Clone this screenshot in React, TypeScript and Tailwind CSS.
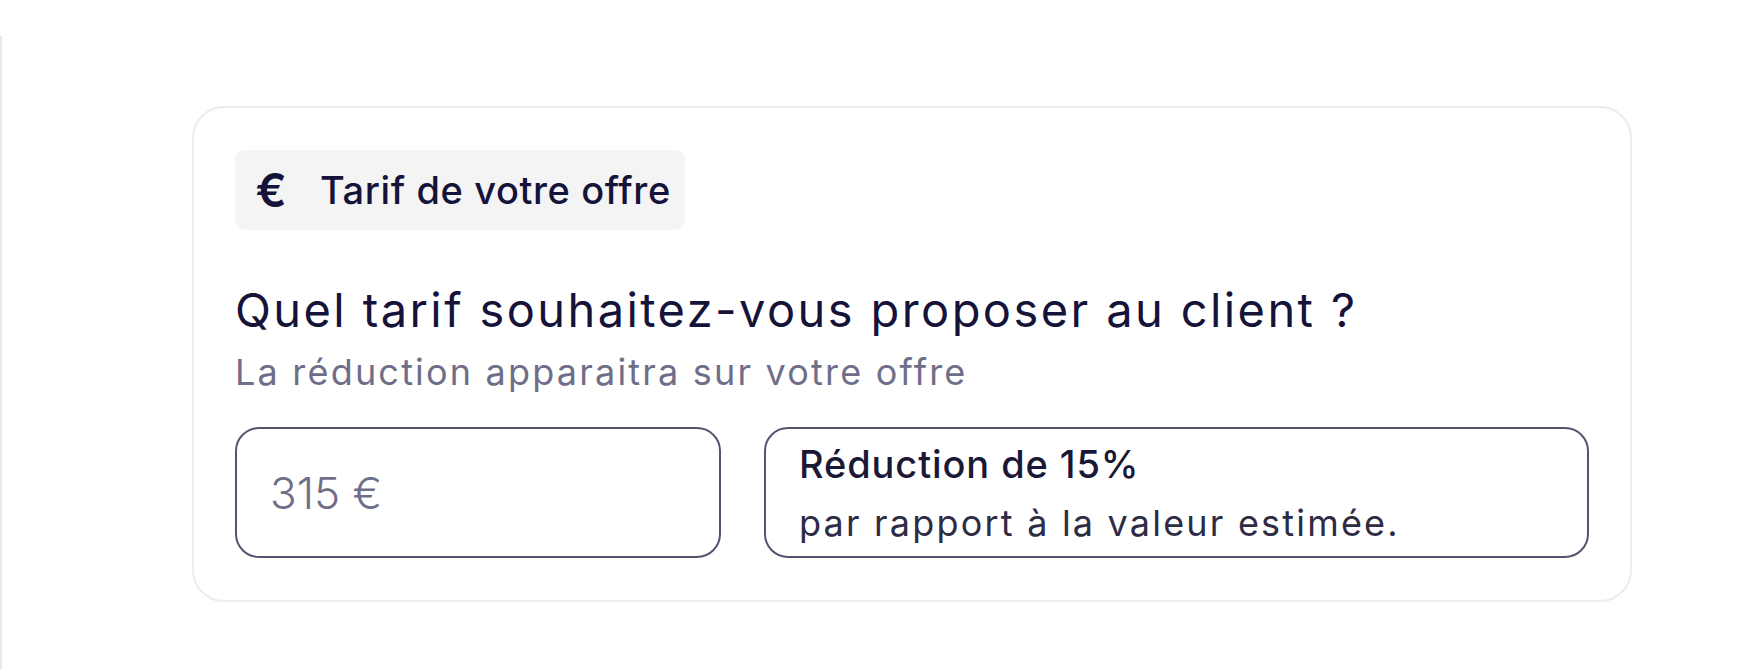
import React from "react";

export default function App() {
  return (
    <div className="min-h-screen w-full bg-white pt-[36px] font-['Inter',sans-serif]">
      <div className="min-h-[633px] border-l-2 border-[#e8e8e8] bg-white pl-[190px] pt-[70px]">
        <div className="flex w-[1440px] flex-col rounded-[32px] border-2 border-[#ececec] bg-white px-[41px] pb-[42px] pt-[42px]">
          <div className="flex h-[80px] w-[450px] items-center rounded-[10px] bg-[#f4f4f5] pl-[20px]">
            <span className="w-[32px] text-center text-[46px] font-semibold leading-none text-[#16133a]">€</span>
            <span className="ml-[33px] text-[38px] font-medium tracking-[0.6px] text-[#16133a]">
              Tarif de votre offre
            </span>
          </div>

          <h2 className="mt-[52px] text-[47px] font-normal leading-[56px] tracking-[2.4px] text-[#16133a]">
            Quel tarif souhaitez-vous proposer au client ?
          </h2>
          <p className="mt-[12px] text-[36px] font-normal leading-[44px] tracking-[2.2px] text-[#6f6e89]">
            La réduction apparaitra sur votre offre
          </p>

          <div className="mt-[33px] flex gap-[43px]">
            <div className="flex h-[131px] w-[486px] items-center rounded-[24px] border-2 border-[#55546f] pl-[33px]">
              <span className="text-[44px] font-light text-[#6f6e89]">315 €</span>
            </div>
            <div className="flex h-[131px] flex-1 flex-col justify-center gap-[14px] rounded-[24px] border-2 border-[#55546f] pl-[33px]">
              <span className="text-[38px] font-medium leading-[46px] tracking-[0.9px] text-[#1b1836]">
                Réduction de 15%
              </span>
              <span className="text-[36px] font-normal leading-[44px] tracking-[2.2px] text-[#2e2c45]">
                par rapport à la valeur estimée.
              </span>
            </div>
          </div>
        </div>
      </div>
    </div>
  );
}
